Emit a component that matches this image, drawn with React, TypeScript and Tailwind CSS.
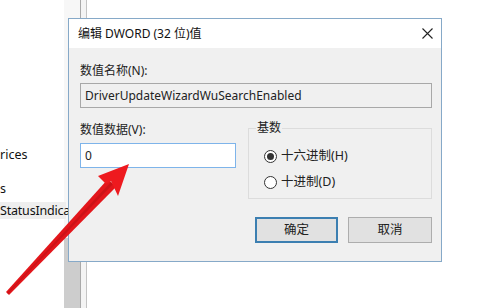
import React from 'react';

const ui = { fontFamily: '"Noto Sans", "Noto Sans CJK SC", sans-serif' };

function Radio({ checked, label }: { checked?: boolean; label: string }) {
  return (
    <div className="flex items-center gap-[4px] h-[16px]">
      <span className="w-[13px] h-[13px] rounded-full border border-[#333] bg-white flex items-center justify-center">
        {checked && <span className="w-[7px] h-[7px] rounded-full bg-[#333]" />}
      </span>
      <span className="text-[12.5px] text-[#222] leading-none">{label}</span>
    </div>
  );
}

function Arrow() {
  return (
    <svg className="absolute left-0 top-0 pointer-events-none" width="500" height="308" viewBox="0 0 500 308">
      {/* shaft, narrow at tail and wider at the head */}
      <polygon points="6,292 9,295 116,187 108,179" fill="#e3161b" />
      <polygon points="7,293 8,294 113,184 111,182" fill="#b01015" opacity="0.45" />
      {/* head */}
      <polygon points="129,164 98,176 106,184 111,181 118,196" fill="#ee1a1f" />
    </svg>
  );
}

export default function App() {
  return (
    <div className="relative w-[500px] h-[308px] bg-white overflow-hidden" style={ui}>
      {/* background registry editor */}
      <div className="flex h-full">
        <div className="w-[64px] h-full relative text-[12.5px] text-[#111]">
          <div className="absolute left-0 top-[146px] leading-[18px]">rices</div>
          <div className="absolute left-0 top-[180px] leading-[18px]">s</div>
          <div className="absolute left-0 top-[202px] w-[66px] leading-[17px] bg-[#eeeeee] whitespace-nowrap tracking-[-0.2px]">StatusIndica</div>
        </div>
        <div className="w-[16px] h-full flex flex-col">
          <div className="flex-1 bg-[#f7f7f7]" />
          <div className="h-[70px] bg-[#cdcdcd]" />
        </div>
        <div className="w-[1px] h-full bg-[#a9a9a9]" />
        <div className="w-[5px] h-full bg-[#f4f4f4]" />
        <div className="w-[1px] h-full bg-[#c4c4c4]" />
        <div className="flex-1" />
      </div>

      {/* dialog */}
      <div className="absolute left-[68px] top-[18px] w-[374px] h-[244px] border border-[#86a9c8] bg-[#f0f0f0] flex flex-col">
        <div className="h-[29px] bg-white flex items-center justify-between pl-[9px] pr-[8px]">
          <span className="text-[12px] text-[#111]">编辑 DWORD (32 位)值</span>
          <svg width="11" height="11" viewBox="0 0 11 11">
            <path d="M0.5 0.5 L10.5 10.5 M10.5 0.5 L0.5 10.5" stroke="#222" strokeWidth="1.1" />
          </svg>
        </div>
        <div className="flex flex-col pl-[11px] pr-[9px] pt-[15px]">
          <div className="text-[12px] leading-[16px] text-[#222]">数值名称(N):</div>
          <div className="mt-[4px] h-[25px] border border-[#a8a8a8] bg-[#f0f0f0] flex items-center pl-[4px] text-[12px] text-[#222]">
            DriverUpdateWizardWuSearchEnabled
          </div>
          <div className="flex mt-[14px] gap-[12px]">
            <div className="w-[156px] flex flex-col">
              <div className="text-[12px] leading-[16px] text-[#222]">数值数据(V):</div>
              <div className="mt-[5px] h-[25px] border border-[#7eb4ea] bg-white flex items-center pl-[4px] text-[12px] text-[#222]">
                0
              </div>
            </div>
            <div className="flex-1 mt-[6px] h-[71px] border border-[#dcdcdc] relative flex flex-col gap-[10px] pl-[15px] pt-[19px]">
              <span className="absolute left-[7px] -top-[9px] px-[1px] bg-[#f0f0f0] text-[12px] leading-[16px] text-[#222]">基数</span>
              <Radio checked label="十六进制(H)" />
              <Radio label="十进制(D)" />
            </div>
          </div>
          <div className="flex justify-end gap-[10px] mt-[18px]">
            <button className="w-[83px] h-[26px] border-2 border-[#3c7fb1] bg-[#e1e1e1] text-[12.5px] text-[#222] flex items-center justify-center">
              确定
            </button>
            <button className="w-[84px] h-[26px] border border-[#adadad] bg-[#e1e1e1] text-[12.5px] text-[#222] flex items-center justify-center">
              取消
            </button>
          </div>
        </div>
      </div>

      <Arrow />
    </div>
  );
}
